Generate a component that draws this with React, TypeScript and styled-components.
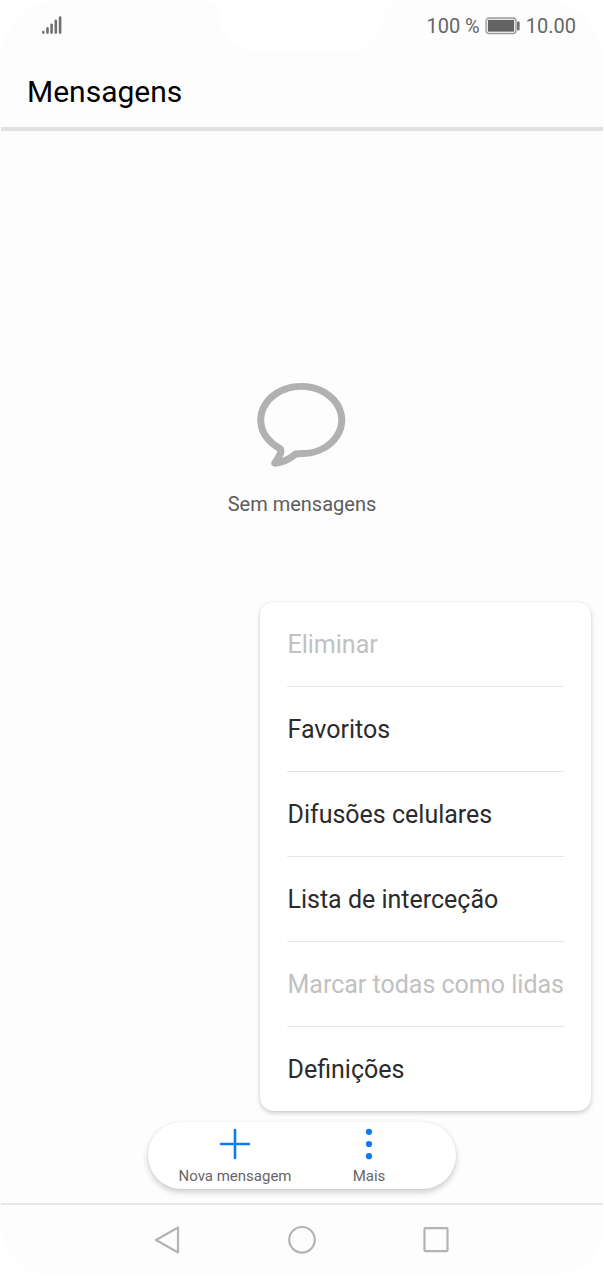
import React from 'react';
import styled, { createGlobalStyle } from 'styled-components';

const GlobalStyle = createGlobalStyle`
  *, *::before, *::after { box-sizing: border-box; }
  body {
    margin: 0;
    background: #ffffff;
    font-family: Roboto, "Liberation Sans", sans-serif;
  }
  button {
    font: inherit;
    color: inherit;
    background: none;
    border: 0;
    padding: 0;
    cursor: pointer;
  }
  button:disabled { cursor: default; }
  svg { display: block; }
`;

const Screen = styled.div`
  position: relative;
  display: flex;
  flex-direction: column;
  min-height: calc(100vh - 1px);
  margin: 0 1px 1px;
  background: #fdfdfd;
  border-radius: 60px 60px 48px 48px;
  overflow: hidden;
`;

const Notch = styled.svg`
  position: absolute;
  top: 0;
  left: 50%;
  transform: translateX(-50%);
`;

const StatusBar = styled.div`
  display: flex;
  align-items: center;
  justify-content: space-between;
  height: 52px;
  padding: 0 27px 0 39px;
  color: #666666;
  font-size: 20px;
  line-height: 24px;
`;

const StatusGroup = styled.div`
  display: flex;
  align-items: center;
  gap: 5px;
`;

const Header = styled.header`
  display: flex;
  align-items: center;
  height: 79px;
  padding: 4px 26px 0;
  border-bottom: 4px solid #e1e1e1;
`;

const Title = styled.h1`
  margin: 0;
  color: #000000;
  font-size: 30px;
  font-weight: 400;
  line-height: 36px;
`;

const Main = styled.main`
  position: relative;
  display: flex;
  flex: 1;
  flex-direction: column;
`;

const EmptyState = styled.div`
  display: flex;
  flex: 1;
  flex-direction: column;
  align-items: center;
  gap: 24px;
  padding-top: 251px;
  color: #5c5c5c;
  font-size: 20px;
  line-height: 24px;
`;

const EmptyText = styled.p`
  margin: 0;
`;

const Menu = styled.ul`
  position: absolute;
  right: 12px;
  bottom: 92px;
  margin: 0;
  padding: 0 27px;
  list-style: none;
  background: #ffffff;
  border-radius: 14px;
  box-shadow: 0 2px 5px rgba(0, 0, 0, 0.2), 0 0 2px rgba(0, 0, 0, 0.06);
`;

const MenuRow = styled.li`
  & + & {
    border-top: 1px solid #e6e6e6;
  }
`;

const MenuButton = styled.button`
  display: block;
  width: 100%;
  height: 84px;
  padding-top: 2px;
  color: #2b2b2b;
  font-size: 25px;
  line-height: 32px;
  text-align: left;
  white-space: nowrap;

  &:disabled { color: #c1c1c1; }
`;

const Dock = styled.div`
  display: flex;
  align-self: center;
  height: 67px;
  margin-bottom: 14px;
  padding: 0 20px;
  background: #ffffff;
  border-radius: 34px;
  box-shadow: 0 3px 6px rgba(0, 0, 0, 0.2), 0 0 2px rgba(0, 0, 0, 0.06);
`;

const DockButton = styled.button`
  display: flex;
  flex-direction: column;
  align-items: center;
  gap: 6px;
  width: 134px;
  padding-top: 6px;
  color: #666666;
  font-size: 15px;
  line-height: 20px;
`;

const NavBar = styled.nav`
  display: flex;
  align-items: center;
  justify-content: center;
  gap: 94px;
  height: 72px;
  border-top: 2px solid #e8e8e8;
`;

const NavButton = styled.button`
  display: flex;
  align-items: center;
  justify-content: center;
  width: 40px;
  height: 40px;
`;

const menuItems = [
  { label: 'Eliminar', disabled: true },
  { label: 'Favoritos', disabled: false },
  { label: 'Difusões celulares', disabled: false },
  { label: 'Lista de interceção', disabled: false },
  { label: 'Marcar todas como lidas', disabled: true },
  { label: 'Definições', disabled: false },
];

const SignalIcon = () => (
  <svg width="24" height="20" viewBox="0 0 24 20" aria-hidden="true">
    <g stroke="#707070" strokeWidth="2.6" strokeLinecap="round">
      <path d="M3.3 16v.6M7.5 12.4v4.2M11.6 8.7v7.9M15.8 4.9v11.7M20.1 1.5v15.1" />
    </g>
  </svg>
);

const BatteryIcon = () => (
  <svg width="36" height="18" viewBox="0 0 36 18" aria-hidden="true">
    <rect x="1" y="1" width="30" height="15.6" rx="3" fill="#e8e8e8" stroke="#9a9a9a" strokeWidth="1.3" />
    <rect x="3" y="3" width="26" height="11.6" fill="#636363" />
    <rect x="32" y="4.4" width="2.6" height="9" rx="1" fill="#707070" />
  </svg>
);

const BubbleIcon = () => (
  <svg width="90" height="86" viewBox="0.7 0 90 86" fill="none" aria-hidden="true">
    <path
      d="M23.5 66.5 C25.8 68.5 25 71.5 18.5 81.2 Q29 80.5 39.5 72 Q42 71.6 45 71.6 A40.5 33.6 0 1 0 23.5 66.5 Z"
      stroke="#b1b1b1"
      strokeWidth="7"
      strokeLinejoin="round"
    />
  </svg>
);

const PlusIcon = () => (
  <svg width="32" height="32" viewBox="0 0 32 32" aria-hidden="true">
    <path d="M16 2v28M2 16h28" stroke="#0a7cf0" strokeWidth="2.6" strokeLinecap="round" />
  </svg>
);

const DotsIcon = () => (
  <svg width="32" height="32" viewBox="0 0 32 32" fill="#0a7cf0" aria-hidden="true">
    <circle cx="16" cy="3.8" r="3.1" />
    <circle cx="16" cy="16" r="3.1" />
    <circle cx="16" cy="28.2" r="3.1" />
  </svg>
);

export default function App() {
  return (
    <>
      <GlobalStyle />
      <Screen>
        <Notch width="196" height="51" viewBox="-14 0 196 51" aria-hidden="true">
          <path
            d="M-14 0 H182 C170 2 167 7 166 20 C162 40 149 50.5 132 50.5 H36 C19 50.5 4 38 2 20 C1 7 -2 2 -14 0 Z"
            fill="#ffffff"
          />
        </Notch>
        <StatusBar>
          <SignalIcon />
          <StatusGroup>
            <span>100 %</span>
            <BatteryIcon />
            <span>10.00</span>
          </StatusGroup>
        </StatusBar>
        <Header>
          <Title>Mensagens</Title>
        </Header>
        <Main>
          <EmptyState>
            <BubbleIcon />
            <EmptyText>Sem mensagens</EmptyText>
          </EmptyState>
          <Menu>
            {menuItems.map((item) => (
              <MenuRow key={item.label}>
                <MenuButton type="button" disabled={item.disabled}>
                  {item.label}
                </MenuButton>
              </MenuRow>
            ))}
          </Menu>
          <Dock>
            <DockButton type="button">
              <PlusIcon />
              Nova mensagem
            </DockButton>
            <DockButton type="button">
              <DotsIcon />
              Mais
            </DockButton>
          </Dock>
        </Main>
        <NavBar>
          <NavButton type="button" aria-label="Voltar">
            <svg width="30" height="30" viewBox="0 0 30 30" fill="none" aria-hidden="true">
              <path d="M3 15 L25 2.5 V27.5 Z" stroke="#b4b4b4" strokeWidth="2.2" strokeLinejoin="round" />
            </svg>
          </NavButton>
          <NavButton type="button" aria-label="Início">
            <svg width="30" height="30" viewBox="0 0 30 30" fill="none" aria-hidden="true">
              <circle cx="15" cy="14.8" r="12.8" stroke="#b4b4b4" strokeWidth="2.2" />
            </svg>
          </NavButton>
          <NavButton type="button" aria-label="Recentes">
            <svg width="30" height="30" viewBox="0 0 30 30" fill="none" aria-hidden="true">
              <rect x="3.5" y="3.2" width="23" height="23" rx="1" stroke="#b4b4b4" strokeWidth="2.2" />
            </svg>
          </NavButton>
        </NavBar>
      </Screen>
    </>
  );
}
